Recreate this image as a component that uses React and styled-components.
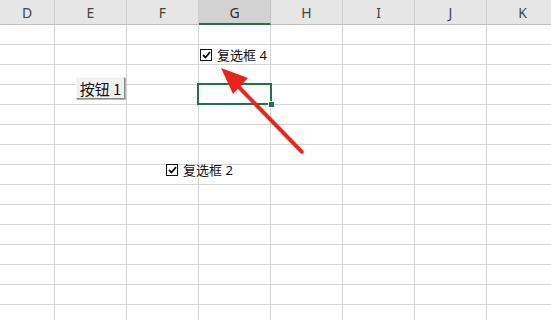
import styled, { createGlobalStyle } from "styled-components";

const GlobalStyle = createGlobalStyle`
  html, body {
    margin: 0;
    padding: 0;
    background: #ffffff;
    overflow: hidden;
  }
  body {
    font-family: "Noto Sans", "Noto Sans CJK SC", sans-serif;
  }
`;

const COLUMNS = ["D", "E", "F", "G", "H", "I", "J", "K"];
const ROW_COUNT = 15;

const Sheet = styled.div`
  position: relative;
  width: 551px;
  height: 320px;
  overflow: hidden;
`;

const Grid = styled.div`
  display: grid;
  grid-template-columns: 55px repeat(7, 72px);
  grid-auto-rows: 20px;
  grid-template-rows: 25px;
`;

const HeaderCell = styled.div`
  display: flex;
  align-items: center;
  justify-content: center;
  box-sizing: border-box;
  background: ${(p) => (p.$active ? "#d2d2d2" : "#e6e6e6")};
  border-right: 1px solid ${(p) => (p.$active ? "#c0c0c0" : "#cfcfcf")};
  border-bottom: ${(p) => (p.$active ? "2px solid #217346" : "1px solid #bdbdbd")};
  font-size: 14px;
  color: ${(p) => (p.$active ? "#2e2e2e" : "#444444")};
  padding-top: ${(p) => (p.$active ? "1px" : "0")};
`;

const Cell = styled.div`
  box-sizing: border-box;
  border-right: 1px solid #d4d4d4;
  border-bottom: 1px solid #d4d4d4;
`;

const Selection = styled.div`
  position: absolute;
  left: 197px;
  top: 83px;
  width: 75px;
  height: 22px;
  box-sizing: border-box;
  border: 2px solid #217346;
`;

const FillHandle = styled.div`
  position: absolute;
  right: -5px;
  bottom: -5px;
  width: 5px;
  height: 5px;
  background: #217346;
  border: 1px solid #ffffff;
`;

const CheckControl = styled.label`
  position: absolute;
  left: ${(p) => p.$x}px;
  top: ${(p) => p.$y}px;
  display: flex;
  align-items: center;
  gap: 5px;
  font-size: 13px;
  color: #111111;
  line-height: 12px;
`;

const Box = styled.span`
  width: 12px;
  height: 12px;
  box-sizing: border-box;
  border: 1px solid #111111;
  background: #ffffff;
  display: flex;
  align-items: center;
  justify-content: center;
`;

const FormButton = styled.div`
  position: absolute;
  left: 76px;
  top: 77px;
  width: 49px;
  height: 22px;
  box-sizing: border-box;
  background: #f0f0f0;
  border-top: 1px solid #f8f8f8;
  border-left: 1px solid #f8f8f8;
  border-right: 1px solid #8a8a8a;
  border-bottom: 1px solid #8a8a8a;
  box-shadow: 1px 1px 0 #b4b4b4;
  display: flex;
  align-items: center;
  justify-content: center;
  font-size: 15px;
  color: #111111;
  font-family: "Noto Sans CJK SC", "Liberation Serif", serif;
  white-space: nowrap;
`;

const ArrowLayer = styled.svg`
  position: absolute;
  left: 0;
  top: 0;
  pointer-events: none;
`;

function Checkbox({ x, y, label }) {
  return (
    <CheckControl $x={x} $y={y}>
      <Box>
        <svg width="9" height="8" viewBox="0 0 9 8">
          <path d="M1 4 L3.5 6.5 L8 1.2" fill="none" stroke="#111" strokeWidth="1.8" />
        </svg>
      </Box>
      <span>{label}</span>
    </CheckControl>
  );
}

export default function App() {
  return (
    <>
      <GlobalStyle />
      <Sheet>
        <Grid>
          {COLUMNS.map((c) => (
            <HeaderCell key={c} $active={c === "G"}>
              {c}
            </HeaderCell>
          ))}
          {Array.from({ length: ROW_COUNT * COLUMNS.length }).map((_, i) => (
            <Cell key={i} />
          ))}
        </Grid>

        <Selection>
          <FillHandle />
        </Selection>

        <Checkbox x={200} y={49} label="复选框 4" />
        <Checkbox x={166} y={164} label="复选框 2" />

        <FormButton>按钮 1</FormButton>

        <ArrowLayer width="551" height="320" viewBox="0 0 551 320">
          <line x1="302" y1="152" x2="234" y2="82" stroke="#b01010" strokeOpacity="0.25" strokeWidth="5" />
          <line x1="302" y1="152" x2="232" y2="80" stroke="#e8231c" strokeWidth="3.5" strokeLinecap="round" />
          <polygon points="221,68 248,78 233,94" fill="#e8231c" />
        </ArrowLayer>
      </Sheet>
    </>
  );
}
